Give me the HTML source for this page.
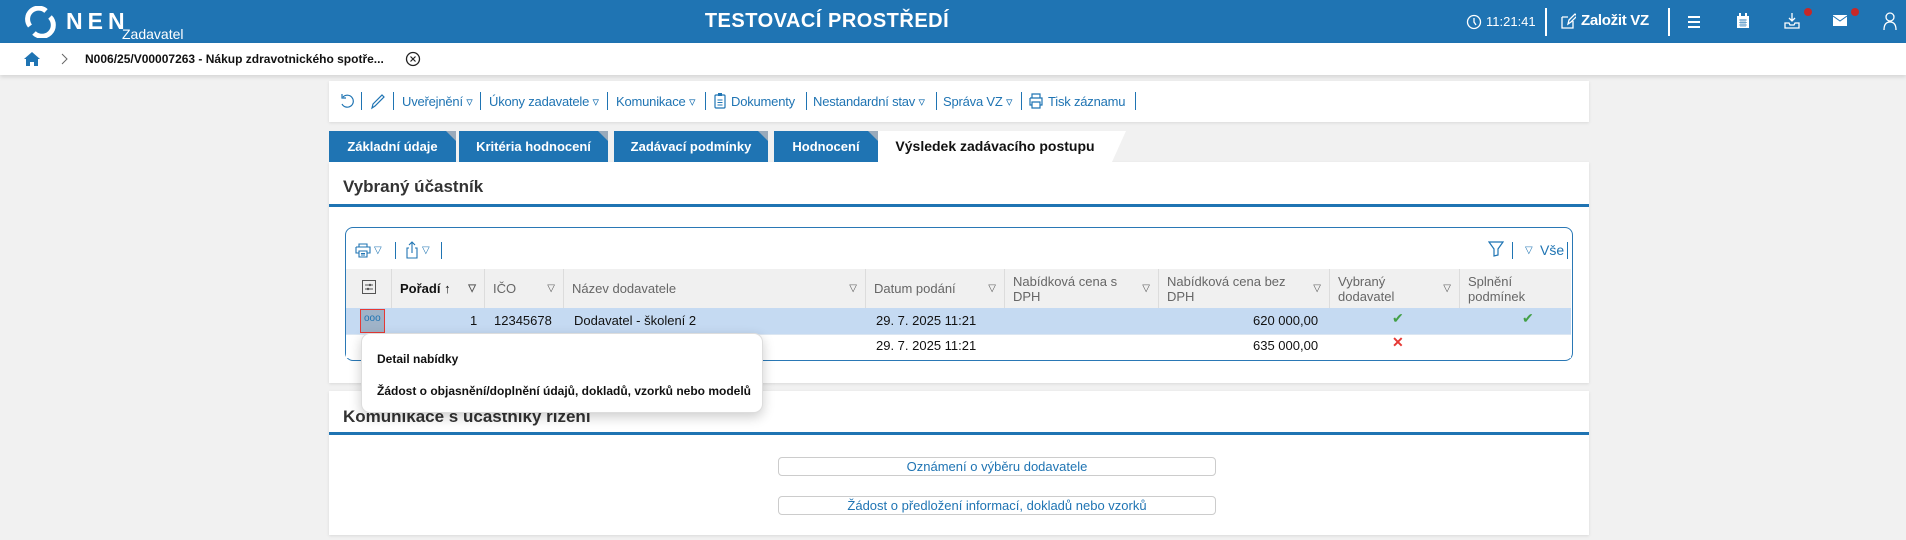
<!DOCTYPE html>
<html><head><meta charset="utf-8"><style>
*{box-sizing:border-box;margin:0;padding:0}
body{width:1906px;height:540px;overflow:hidden;background:#f1f1f1;font-family:"Liberation Sans",sans-serif;position:relative;color:#222}
.a{position:absolute}
.hdr{left:0;top:0;width:1906px;height:43px;background:#1f74b3}
.bc{left:0;top:43px;width:1906px;height:32px;background:#fff;box-shadow:0 2px 4px rgba(0,0,0,.12)}
.tb{left:329px;top:81px;width:1260px;height:41px;background:#fff;box-shadow:0 1px 3px rgba(0,0,0,.1)}
.tbi{top:94px;font-size:13px;color:#1f74b3;white-space:nowrap;letter-spacing:-.2px}
.sep{width:1px;height:18px;background:#1f74b3;top:92px}
.tab{top:131px;height:31px;background:#1f74b3;color:#fff;font-weight:bold;font-size:13px;line-height:31px;text-align:center}
.tab:after{content:"";position:absolute;right:0;top:0;border-left:10px solid transparent;border-top:10px solid #9ab;}
.panel{background:#fff;left:329px;width:1260px;box-shadow:0 1px 3px rgba(0,0,0,.1)}
.h2{font-size:17px;font-weight:bold;color:#333}
.th{top:269px;height:39px;background:#f0f0f0;border-right:1px solid #dcdcdc;font-size:13px;color:#666;padding:5px 30px 5px 8px;line-height:15px}
.tri{position:absolute;right:8px;top:12px;font-size:10px;color:#555}
.td{font-size:13px;color:#111;line-height:26px;white-space:nowrap}
.btn{left:778px;width:438px;height:19px;border:1px solid #ccc;border-radius:4px;background:#fff;color:#1f74b3;font-size:13px;text-align:center;line-height:17px}
</style></head><body>
<div class="a hdr"></div>
<svg class="a" style="left:24px;top:6px" width="32" height="32" viewBox="0 0 32 32"><path d="M6 20A11 11 0 0 1 22 5" fill="none" stroke="#fff" stroke-width="5"/><path d="M26 11A11 11 0 0 1 10 27" fill="none" stroke="#fff" stroke-width="5"/></svg>
<div class="a" style="left:66px;top:8px;font-size:23px;font-weight:bold;color:#fff;letter-spacing:5px">NEN</div>
<div class="a" style="left:122px;top:26px;font-size:14px;color:#fff">Zadavatel</div>
<div class="a" style="left:0;width:1654px;top:10px;text-align:center;font-size:20px;font-weight:bold;color:#fff;letter-spacing:.5px">TESTOVACÍ PROSTŘEDÍ</div>
<svg class="a" style="left:1466px;top:13px" width="16" height="18"><circle cx="8" cy="9" r="6.5" fill="none" stroke="#fff" stroke-width="1.3"/><path d="M8 5v4l2 3" stroke="#fff" fill="none" stroke-width="1.3"/></svg>
<div class="a" style="left:1486px;top:14px;font-size:13px;color:#fff">11:21:41</div>
<div class="a" style="left:1545px;top:8px;width:2px;height:28px;background:#fff"></div>
<svg class="a" style="left:1560px;top:12px" width="16" height="18"><path d="M2 5h6M2 5v11h11V9M8 12l1-4 6-6 2 2-6 6z" stroke="#fff" fill="none" stroke-width="1.3"/></svg>
<div class="a" style="left:1581px;top:12px;font-size:15px;font-weight:bold;color:#fff;letter-spacing:-.3px">Založit VZ</div>
<div class="a" style="left:1668px;top:8px;width:2px;height:28px;background:#fff"></div>
<svg class="a" style="left:1687px;top:15px" width="14" height="14"><path d="M1 2h12M1 7h12M1 12h12" stroke="#fff" stroke-width="2"/></svg>
<svg class="a" style="left:1736px;top:13px" width="14" height="16"><rect x="1" y="3" width="12" height="12" fill="#fff"/><rect x="3" y="0" width="2" height="4" fill="#fff"/><rect x="9" y="0" width="2" height="4" fill="#fff"/><path d="M3 7h8M3 9.5h8M3 12h8M5 6v8M7 6v8M9 6v8" stroke="#1f74b3" stroke-width=".6"/></svg>
<svg class="a" style="left:1784px;top:12px" width="16" height="18"><path d="M8 1v8M5 6l3 3 3-3M1 11v5h14v-5h-4l-1 2H6l-1-2z" stroke="#fff" fill="none" stroke-width="1.3"/></svg>
<div class="a" style="left:1804px;top:8px;width:8px;height:8px;border-radius:50%;background:#c62828"></div>
<svg class="a" style="left:1833px;top:15px" width="14" height="12"><rect x="0" y="0" width="14" height="11" fill="#fff"/><path d="M0 1l7 5 7-5" stroke="#1f74b3" fill="none"/></svg>
<div class="a" style="left:1851px;top:8px;width:8px;height:8px;border-radius:50%;background:#c62828"></div>
<svg class="a" style="left:1883px;top:12px" width="14" height="19"><circle cx="7" cy="5" r="4" fill="none" stroke="#fff" stroke-width="1.3"/><path d="M1 18c0-5 2-8 6-8s6 3 6 8" fill="none" stroke="#fff" stroke-width="1.3"/></svg>

<div class="a bc"></div>
<svg class="a" style="left:23px;top:51px" width="18" height="16"><path d="M9 1L1 8h2v7h4v-4h4v4h4V8h2z" fill="#1f74b3"/></svg>
<svg class="a" style="left:61px;top:53px" width="8" height="12"><path d="M1 1l5 5-5 5" stroke="#666" fill="none"/></svg>
<div class="a" style="left:85px;top:52px;font-size:12px;font-weight:bold;color:#111">N006/25/V00007263 - Nákup zdravotnického spotře...</div>
<svg class="a" style="left:405px;top:51px" width="16" height="16"><circle cx="8" cy="8" r="6.5" stroke="#222" fill="none" stroke-width="1.3"/><path d="M5.5 5.5l5 5M10.5 5.5l-5 5" stroke="#222" stroke-width="1.2"/></svg>

<div class="a tb"></div>
<svg class="a" style="left:339px;top:93px" width="15" height="16"><path d="M4 4a6 6 0 1 1-1 7M3 1v4h4" stroke="#1f74b3" fill="none" stroke-width="1.2"/></svg>
<div class="a sep" style="left:361px"></div>
<svg class="a" style="left:370px;top:92px" width="16" height="18"><path d="M2 16l1-4 9-9 2 2-9 9z" stroke="#1f74b3" fill="none" stroke-width="1.2"/></svg>
<div class="a sep" style="left:393px"></div>
<div class="a tbi" style="left:402px">Uveřejnění ▿</div>
<div class="a sep" style="left:480px"></div>
<div class="a tbi" style="left:489px">Úkony zadavatele ▿</div>
<div class="a sep" style="left:607px"></div>
<div class="a tbi" style="left:616px">Komunikace ▿</div>
<div class="a sep" style="left:705px"></div>
<svg class="a" style="left:714px;top:92px" width="12" height="17"><rect x="1" y="3" width="10" height="13" rx="1" stroke="#1f74b3" fill="none" stroke-width="1.2"/><rect x="4" y="1" width="4" height="3" fill="#1f74b3"/><path d="M3.5 8h5M3.5 10.5h5M3.5 13h5" stroke="#1f74b3"/></svg>
<div class="a tbi" style="left:731px">Dokumenty</div>
<div class="a sep" style="left:806px"></div>
<div class="a tbi" style="left:813px">Nestandardní stav ▿</div>
<div class="a sep" style="left:936px"></div>
<div class="a tbi" style="left:943px">Správa VZ ▿</div>
<div class="a sep" style="left:1021px"></div>
<svg class="a" style="left:1029px;top:93px" width="14" height="16"><path d="M3 5V1h8v4M1 5h12v7h-2M1 5v7h2M3 9h8v6H3z" stroke="#1f74b3" fill="none" stroke-width="1.2"/></svg>
<div class="a tbi" style="left:1048px">Tisk záznamu</div>
<div class="a sep" style="left:1135px"></div>

<div class="a panel" style="top:162px;height:221px"></div>
<div class="a tab" style="left:329px;width:127px">Základní údaje</div>
<div class="a tab" style="left:459px;width:149px">Kritéria hodnocení</div>
<div class="a tab" style="left:614px;width:154px">Zadávací podmínky</div>
<div class="a tab" style="left:774px;width:104px">Hodnocení</div>
<div class="a" style="left:878px;top:131px;width:234px;height:31px;background:#fff;font-weight:bold;font-size:14px;line-height:31px;text-align:center;color:#111">Výsledek zadávacího postupu</div>
<div class="a" style="left:1112px;top:131px;width:0;height:0;border-left:14px solid #fff;border-bottom:31px solid transparent"></div>
<div class="a h2" style="left:343px;top:177px">Vybraný účastník</div>
<div class="a" style="left:329px;top:204px;width:1260px;height:3px;background:#1f74b3"></div>

<div class="a" style="left:345px;top:227px;width:1228px;height:134px;border:1.5px solid #2a78b5;border-radius:8px;background:#fff"></div>
<svg class="a" style="left:355px;top:243px" width="16" height="15"><path d="M4 4V1h8v3M1 4h14v6h-3M1 4v6h3M4 8h8v6H4zM6 10.5h4M6 12h4" stroke="#1f74b3" fill="none" stroke-width="1.1"/></svg>
<div class="a" style="left:374px;top:245px;font-size:10px;color:#1f74b3">▽</div>
<div class="a" style="left:395px;top:242px;width:1px;height:17px;background:#1f74b3"></div>
<svg class="a" style="left:405px;top:241px" width="14" height="18"><path d="M4 7H2v10h10V7h-2M7 12V1M4 4l3-3 3 3" stroke="#1f74b3" fill="none" stroke-width="1.1"/></svg>
<div class="a" style="left:422px;top:245px;font-size:10px;color:#1f74b3">▽</div>
<div class="a" style="left:441px;top:242px;width:1px;height:17px;background:#1f74b3"></div>
<svg class="a" style="left:1488px;top:241px" width="16" height="16"><path d="M1 1h14l-5 7v6l-4 1V8z" stroke="#1f74b3" fill="none" stroke-width="1.2"/></svg>
<div class="a" style="left:1512px;top:242px;width:1px;height:17px;background:#1f74b3"></div>
<div class="a" style="left:1525px;top:245px;font-size:10px;color:#1f74b3">▽</div>
<div class="a" style="left:1540px;top:242px;font-size:14px;color:#1f74b3">Vše</div>
<div class="a" style="left:1567px;top:242px;width:1px;height:17px;background:#1f74b3"></div>

<div class="a th" style="left:346px;width:46px;padding:0"><svg width="14" height="14" style="margin:11px 0 0 16px"><rect x=".5" y=".5" width="13" height="13" fill="none" stroke="#555"/><path d="M3 5h8M3 9h8" stroke="#555"/><circle cx="8" cy="5" r="1.2" fill="#555"/><circle cx="6" cy="9" r="1.2" fill="#555"/></svg></div>
<div class="a th" style="left:392px;width:93px;color:#111;font-weight:bold;padding-top:12px">Pořadí ↑<span class="tri">▽</span></div>
<div class="a th" style="left:485px;width:79px;padding-top:12px">IČO<span class="tri">▽</span></div>
<div class="a th" style="left:564px;width:302px;padding-top:12px">Název dodavatele<span class="tri">▽</span></div>
<div class="a th" style="left:866px;width:139px;padding-top:12px">Datum podání<span class="tri">▽</span></div>
<div class="a th" style="left:1005px;width:154px">Nabídková cena s DPH<span class="tri">▽</span></div>
<div class="a th" style="left:1159px;width:171px">Nabídková cena bez DPH<span class="tri">▽</span></div>
<div class="a th" style="left:1330px;width:130px">Vybraný<br>dodavatel<span class="tri">▽</span></div>
<div class="a th" style="left:1460px;width:111px;border-right:0">Splnění<br>podmínek</div>

<div class="a" style="left:346px;top:308px;width:1225px;height:26px;background:#c5daf2"></div>
<div class="a" style="left:346px;top:334px;width:1225px;height:24px;background:#fff;border-top:1px solid #dbe6f2"></div>
<div class="a" style="left:360px;top:309px;width:25px;height:24px;border:1.5px solid #e53935;background:#9fb3c8"></div>
<div class="a" style="left:364px;top:313px;font-size:10px;color:#1f74b3">ooo</div>
<div class="a td" style="left:470px;top:308px">1</div>
<div class="a td" style="left:494px;top:308px">12345678</div>
<div class="a td" style="left:574px;top:308px">Dodavatel - školení 2</div>
<div class="a td" style="left:876px;top:308px">29. 7. 2025 11:21</div>
<div class="a td" style="left:1253px;top:308px">620 000,00</div>
<div class="a" style="left:1392px;top:310px;color:#43a047;font-size:14px">✔</div>
<div class="a" style="left:1522px;top:310px;color:#43a047;font-size:14px">✔</div>
<div class="a td" style="left:876px;top:333px">29. 7. 2025 11:21</div>
<div class="a td" style="left:1253px;top:333px">635 000,00</div>
<div class="a" style="left:1392px;top:334px;color:#e53935;font-size:14px;font-weight:bold">✕</div>

<div class="a panel" style="top:391px;height:144px"></div>
<div class="a h2" style="left:343px;top:407px">Komunikace s účastníky řízení</div>
<div class="a" style="left:329px;top:432px;width:1260px;height:3px;background:#1f74b3"></div>
<div class="a btn" style="top:457px">Oznámení o výběru dodavatele</div>
<div class="a btn" style="top:496px">Žádost o předložení informací, dokladů nebo vzorků</div>

<div class="a" style="left:361px;top:333px;width:402px;height:80px;background:#fff;border-radius:9px;border:1px solid #ddd;box-shadow:0 4px 12px rgba(0,0,0,.2)"></div>
<div class="a" style="left:377px;top:352px;font-size:12px;font-weight:bold;color:#111">Detail nabídky</div>
<div class="a" style="left:377px;top:384px;font-size:12px;font-weight:bold;color:#111">Žádost o objasnění/doplnění údajů, dokladů, vzorků nebo modelů</div>
</body></html>
